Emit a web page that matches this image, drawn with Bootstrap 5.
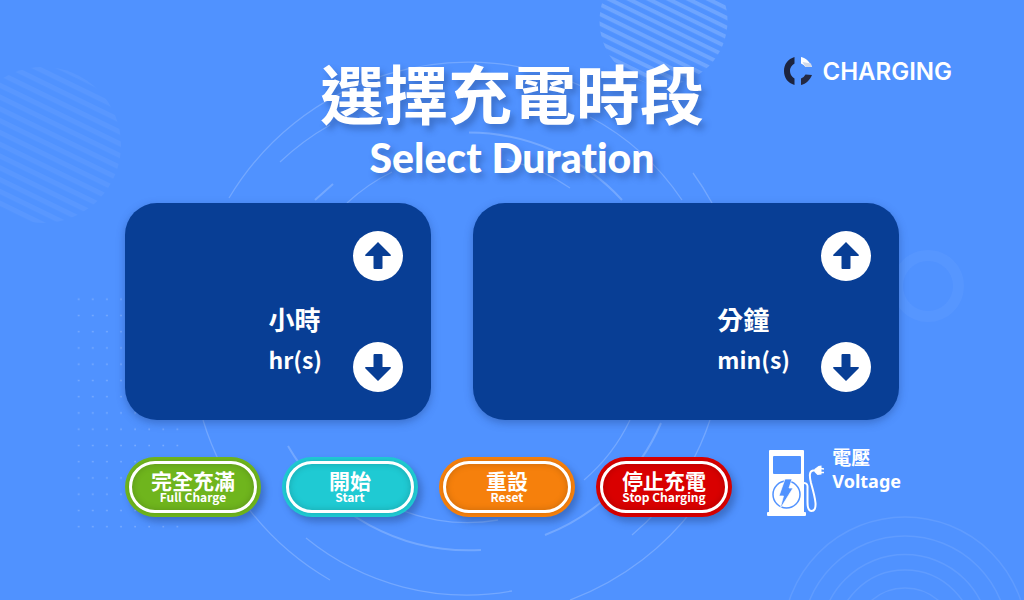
<!DOCTYPE html>
<html lang="zh-Hant">
<head>
<meta charset="utf-8">
<meta name="viewport" content="width=device-width, initial-scale=1">
<title>選擇充電時段 Select Duration</title>
<link rel="stylesheet" href="https://cdn.jsdelivr.net/npm/bootstrap@5.3.0/dist/css/bootstrap.min.css">
<style>
  body { background: #5092ff; color: #fff; font-family: "Noto Sans CJK TC", sans-serif; }
  .backdrop { z-index: 0; }
  .screen { z-index: 1; }
  .top-bar { display: grid; grid-template-columns: 1fr auto 1fr; padding: 56px 72px 0; }
  .title-zh { font-size: 64px; line-height: 64px; font-weight: 700; margin-top: 3px; text-shadow: 4px 5px 6px rgba(30,60,120,.38); }
  .title-en { font-family: Lato, sans-serif; font-size: 41px; line-height: 48px; font-weight: 900; font-variant-ligatures: none; margin-top: 11px; text-shadow: 4px 5px 6px rgba(30,60,120,.38); }
  .brand { gap: 8px; }
  .brand-name { font-family: Inter, sans-serif; font-size: 24px; line-height: 32px; font-weight: 600; }
  .content { padding: 0 125px; }
  .panels { display: grid; grid-template-columns: 306fr 426fr; gap: 42px; margin-top: 21px; }
  .panel { background: #083e95; border-radius: 32px; padding: 28px; box-shadow: 0 3px 8px rgba(20,50,110,.35); }
  .unit { line-height: 41px; font-weight: 700; font-size: 23px; padding-bottom: 12px; }
  .unit-zh { font-size: 26px; }
  .steps { gap: 61px; padding-left: 31px; }
  .round { width: 50px; height: 50px; border: 0; }
  .actions { margin-top: 37px; gap: 21px; }
  .act { width: 136px; height: 60px; border: 0; border-radius: 30px; padding: 4px; color: #fff; background: var(--c); box-shadow: 4px 5px 7px rgba(30,60,120,.4); }
  .ring { border: 3px solid #fff; border-radius: 26px; padding-bottom: 1px; box-shadow: inset 0 0 7px rgba(0,0,0,.18), 0 0 4px rgba(0,0,0,.14); }
  .act-zh { font-size: 21px; line-height: 20px; font-weight: 700; }
  .act-en { font-size: 12px; line-height: 14px; font-weight: 700; }
  .green { --c: #6fb51d; } .teal { --c: #1fcad3; } .orange { --c: #f6800c; } .red { --c: #d90000; }
  .voltage { gap: 8px; margin: -8px -2px 0 auto; }
  .volt-zh { font-size: 19px; line-height: 16px; font-weight: 700; }
  .volt-en { font-family: "Noto Sans", sans-serif; font-size: 18px; line-height: 32px; font-weight: 700; }
</style>
</head>
<body class="min-vh-100 position-relative overflow-hidden">
<svg class="backdrop position-absolute top-0 start-0 w-100 h-100" viewBox="0 0 1024 600" preserveAspectRatio="xMidYMid slice" fill="none" aria-hidden="true">
  <defs>
    <pattern id="s1" width="20" height="10.6" patternUnits="userSpaceOnUse" patternTransform="rotate(26)"><rect width="20" height="5" fill="#fff"/></pattern>
    <pattern id="s2" width="20" height="8.7" patternUnits="userSpaceOnUse" patternTransform="rotate(26)"><rect width="20" height="4" fill="#fff"/></pattern>
    <pattern id="dots" x="72" y="291" width="14.1" height="16.25" patternUnits="userSpaceOnUse"><rect x="6" y="7.5" width="1.4" height="1.4" fill="#fff"/></pattern>
  </defs>
  <circle cx="43" cy="145" r="78" fill="url(#s1)" opacity=".05"/>
  <circle cx="663.500" cy="21" r="64" fill="url(#s2)" opacity=".17"/>
  <rect x="72" y="291" width="112" height="243" fill="url(#dots)" opacity=".3"/>
  <circle cx="928" cy="286" r="30.500" stroke="#fff" stroke-width="11" opacity=".04"/>
  <g stroke="#fff" stroke-width="1.300" opacity=".2">
    <path d="M229 198A279 279 0 0 1 590 90"/>
    <path d="M280 162A256 256 0 0 1 330 125M590 117A256 256 0 0 1 682 200"/>
    <path d="M693 173A281 281 0 0 1 712 203"/>
    <path d="M347 203A184 184 0 0 1 392 172M507 160A184 184 0 0 1 570 188"/>
    <path d="M203 420A277 277 0 0 0 330 580"/>
    <path d="M306 538A255 255 0 0 0 512 591M632 535A255 255 0 0 0 710 420"/>
    <path d="M570 600A279 279 0 0 0 700 500"/>
    <path d="M380 500A181 181 0 0 0 498 520M584 480A181 181 0 0 0 630 420"/>
    <g stroke-width="2"><path d="M469 132.500A209 209 0 0 1 622 200M315 200L333 184M288 446A209 209 0 0 0 481 550M545 535A209 209 0 0 0 661 423"/></g>
  </g>
  <g stroke="#fff" stroke-width="1.500" opacity=".09">
    <circle cx="905" cy="639" r="122"/><circle cx="905" cy="639" r="103"/><circle cx="905" cy="639" r="84.500"/><circle cx="905" cy="639" r="69"/><circle cx="905" cy="639" r="51"/>
  </g>
</svg>

<main class="screen position-relative">
  <header class="top-bar">
    <div></div>
    <div class="text-center">
      <h1 class="title-zh mb-0">選擇充電時段</h1>
      <p class="title-en mb-0">Select Duration</p>
    </div>
    <div class="brand d-flex justify-content-end align-items-start">
      <svg width="30" height="30" viewBox="0 -1 30 30" aria-hidden="true">
        <path d="M10.500 0V6.500Q6 9 6 14T10.500 21.500V28C4 26 0 21 0 14S4 2 10.500 0Z" fill="#1c2440"/>
        <path d="M17 0C22 1 26 5 28 10H21.500Q20 7.500 17 6.500Z" fill="#fff"/><path d="M18.500 5L27 6.500L28 10H21.500Z" fill="#cfd8ea"/>
        <path d="M28 18C26 23 22 27 17 28V21.500Q20 20.500 21.500 17.500Z" fill="#242943"/>
      </svg>
      <span class="brand-name">CHARGING</span>
    </div>
  </header>

  <div class="content">
    <div class="panels">
      <section class="panel d-flex justify-content-end" aria-label="小時 hr(s)">
        <div class="unit align-self-end">
          <div class="unit-zh">小時</div>
          <div>hr(s)</div>
        </div>
        <div class="steps d-flex flex-column">
          <button type="button" class="round rounded-circle bg-white p-0" aria-label="增加小時"><svg width="50" height="50" viewBox="0 0 50 50" class="d-block"><path d="M25 11L38 24Q38 25 37 25H29.500V37Q29.500 38 28.500 38H21.500Q20.500 38 20.500 37V25H13Q12 25 12 24Z" fill="#083e95"/></svg></button>
          <button type="button" class="round rounded-circle bg-white p-0" aria-label="減少小時"><svg width="50" height="50" viewBox="0 0 50 50" class="d-block"><path d="M25 39L38 26Q38 25 37 25H29.500V13Q29.500 12 28.500 12H21.500Q20.500 12 20.500 13V25H13Q12 25 12 26Z" fill="#083e95"/></svg></button>
        </div>
      </section>
      <section class="panel d-flex justify-content-end" aria-label="分鐘 min(s)">
        <div class="unit align-self-end">
          <div class="unit-zh">分鐘</div>
          <div>min(s)</div>
        </div>
        <div class="steps d-flex flex-column">
          <button type="button" class="round rounded-circle bg-white p-0" aria-label="增加分鐘"><svg width="50" height="50" viewBox="0 0 50 50" class="d-block"><path d="M25 11L38 24Q38 25 37 25H29.500V37Q29.500 38 28.500 38H21.500Q20.500 38 20.500 37V25H13Q12 25 12 24Z" fill="#083e95"/></svg></button>
          <button type="button" class="round rounded-circle bg-white p-0" aria-label="減少分鐘"><svg width="50" height="50" viewBox="0 0 50 50" class="d-block"><path d="M25 39L38 26Q38 25 37 25H29.500V13Q29.500 12 28.500 12H21.500Q20.500 12 20.500 13V25H13Q12 25 12 26Z" fill="#083e95"/></svg></button>
        </div>
      </section>
    </div>

    <div class="actions d-flex align-items-start">
      <button type="button" class="act green"><span class="ring d-flex flex-column justify-content-center h-100"><span class="act-zh">完全充滿</span><span class="act-en">Full Charge</span></span></button>
      <button type="button" class="act teal"><span class="ring d-flex flex-column justify-content-center h-100"><span class="act-zh">開始</span><span class="act-en">Start</span></span></button>
      <button type="button" class="act orange"><span class="ring d-flex flex-column justify-content-center h-100"><span class="act-zh">重設</span><span class="act-en">Reset</span></span></button>
      <button type="button" class="act red"><span class="ring d-flex flex-column justify-content-center h-100"><span class="act-zh">停止充電</span><span class="act-en">Stop Charging</span></span></button>
      <div class="voltage d-flex align-items-start">
        <svg width="57" height="68" viewBox="0 0 57 68" class="flex-shrink-0" aria-hidden="true">
          <path fill="#fff" fill-rule="evenodd" d="M3 1H36Q37 1 37 2V63H38Q39 63 39 64V66Q39 67 38 67H1Q0 67 0 66V64Q0 63 1 63H2V2Q2 1 3 1ZM7 7Q6 7 6 8V24Q6 25 7 25H33Q34 25 34 24V8Q34 7 33 7Z"/>
          <circle cx="19.500" cy="45.500" r="13.500" fill="none" stroke="#5092ff" stroke-width="1.500"/>
          <path d="M18 30H25L22 39H26L13 60L16.500 47H12Z" fill="#5092ff" stroke="#fff" stroke-width=".7"/>
          <path d="M37 34Q41 34 40.500 39V53Q40.500 62 44.500 62Q49 62 48.500 54Q48 48 44 34Q41 22 46 21.500H49" fill="none" stroke="#fff" stroke-width="2"/>
          <path d="M47.500 20L51.500 17L54.500 16.500V25.500L50.500 26L47.500 23Z" fill="#fff"/>
          <path d="M54 19.500L57 20M54 23.500H57" stroke="#fff" stroke-width="1.500"/>
        </svg>
        <div><div class="volt-zh">電壓</div><div class="volt-en">Voltage</div></div>
      </div>
    </div>
  </div>
</main>
<script src="https://cdn.jsdelivr.net/npm/bootstrap@5.3.0/dist/js/bootstrap.bundle.min.js"></script>
</body>
</html>
